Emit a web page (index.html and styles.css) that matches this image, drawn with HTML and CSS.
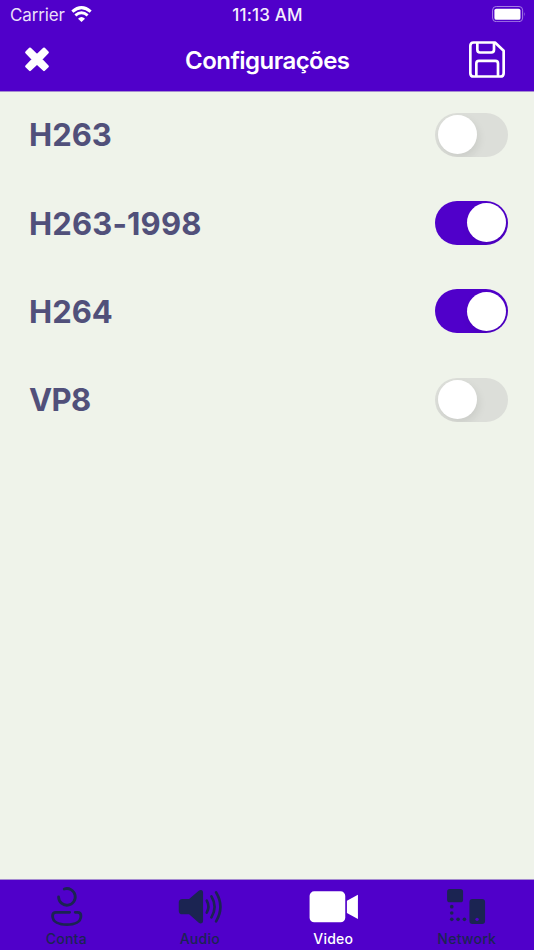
FILE: index.html
```html
<!DOCTYPE html>
<html lang="pt">
<head>
<meta charset="utf-8">
<title>Configurações</title>
<link rel="stylesheet" href="styles.css">
</head>
<body>
<div class="app">
  <header class="header">
    <div class="status">
      <div class="carrier"><span class="carrier-name">Carrier</span>
        <svg class="wifi" viewBox="0 0 63 48"><path d="M4 17Q31.500-7 59 17" fill="none" stroke="#fff" stroke-width="9"/><path d="M13 28Q31.500 12 50 28" fill="none" stroke="#fff" stroke-width="8.500"/><path d="M21 38Q31.500 28 42 38L31.500 48Z" fill="#fff"/></svg>
      </div>
      <span class="time">11:13 AM</span>
      <svg class="battery" viewBox="0 0 104 50"><rect x="1.500" y="1.500" width="91" height="46" rx="11" fill="none" stroke="#a780e5" stroke-width="3"/><rect x="7" y="8" width="79" height="34" rx="6" fill="#fff"/><path d="M97 18q5 7 0 14z" fill="#a780e5"/></svg>
    </div>
    <div class="navbar">
      <svg class="close" viewBox="0 0 72 74"><path d="M15 5L36 25L57 5L68 16L48 37L68 58L57 69L36 49L15 69L4 58L24 37L4 16Z" fill="#fff" stroke="#fff" stroke-width="7" stroke-linejoin="round"/></svg>
      <h1 class="title">Configurações</h1>
      <svg class="save" viewBox="0 0 108 110"><g fill="none" stroke="#fff" stroke-width="8" stroke-linejoin="round"><path d="M14 4H78L104 29V96Q104 106 94 106H14Q4 106 4 96V14Q4 4 14 4Z"/><path d="M25 5V26Q25 34 33 34H67Q75 34 75 26V5"/><path d="M22 105V67Q22 59 30 59H79Q87 59 87 67V105"/></g></svg>
    </div>
  </header>
  <main class="list">
    <div class="row"><span class="label">H263</span><span class="switch"></span></div>
    <div class="row"><span class="label wide">H263-1998</span><span class="switch on"></span></div>
    <div class="row"><span class="label">H264</span><span class="switch on"></span></div>
    <div class="row"><span class="label tight">VP8</span><span class="switch"></span></div>
  </main>
  <nav class="tabs">
    <div class="tab"><svg class="icon" viewBox="-9.750 33 240 144"><g fill="none" stroke="currentColor" stroke-width="8.500" stroke-linecap="round"><path d="M102 57A25 25 0 1 1 85 81"/><path d="M118 127H77Q67 127 67 138C67 156 87 164 110 164S152 156 152 138Q152 127 142 127H135"/></g></svg><span>Conta</span></div>
    <div class="tab"><svg class="icon" viewBox=".750 33 240 144"><path d="M68 87H88L117 62Q122 58 127 61Q130 63 130 68V152Q130 157 127 159Q122 162 117 158L88 133H68Q57 133 57 122V98Q57 87 68 87Z" fill="currentColor"/><g fill="none" stroke="currentColor" stroke-width="8" stroke-linecap="round"><path d="M141 92Q151 110 141 128M155 79Q174 110 155 142M169 67Q195 110 169 154"/></g></svg><span>Audio</span></div>
    <div class="tab active"><svg class="icon" viewBox="11.250 33 240 144"><rect x="58" y="64" width="107" height="93" rx="14" fill="currentColor"/><path d="M170 92L203 74V147L170 129Z" fill="currentColor"/></svg><span>Video</span></div>
    <div class="tab"><svg class="icon" viewBox="6.750 33 240 144"><g fill="currentColor"><rect x="67" y="57" width="48" height="40" rx="8"/><rect x="134" y="87" width="47" height="75" rx="9"/><circle cx="81" cy="110" r="5.500"/><circle cx="81" cy="129" r="5.500"/><circle cx="81" cy="148" r="5.500"/><circle cx="100" cy="148" r="5.500"/><circle cx="119" cy="148" r="5.500"/></g><circle cx="157" cy="148" r="5" fill="#5000ca"/></svg><span>Network</span></div>
  </nav>
</div>
</body>
</html>
```
FILE: styles.css
```css
* { box-sizing: border-box; }
body { margin: 0; font-family: Inter, "Liberation Sans", sans-serif; }
svg { display: block; flex: none; }
.app { width: 534px; height: 950px; display: flex; flex-direction: column; background: #eff3ea; }
.header { height: 92px; flex: none; background: #5000ca; border-bottom: 1px solid #a58bd0; color: #fff; }
.status { height: 30px; padding: 0 8px 0 10px; display: grid; grid-template-columns: 1fr auto 1fr; align-items: center; }
.carrier { display: flex; align-items: center; gap: 7px; font-size: 17px; color: #e9dff8; }
.carrier-name { width: 54px; letter-spacing: -.15px; white-space: nowrap; }
.wifi { width: 21px; height: 16px; margin-top: -2px; }
.time { font-size: 17px; font-weight: 500; letter-spacing: .15px; margin-left: -1px; color: #f4effc; }
.battery { width: 34.500px; height: 16.500px; justify-self: end; margin-top: -2px; }
.navbar { height: 60px; padding: 0 28.500px 0 25px; display: grid; grid-template-columns: 1fr auto 1fr; align-items: center; }
.close { width: 24px; height: 24.700px; margin-top: -1px; }
.title { margin: 1px -2px 0 2px; font-size: 24px; line-height: 32px; font-weight: 600; letter-spacing: -.55px; }
.save { width: 36px; height: 37px; justify-self: end; margin: -2px 1px 0 0; }
.list { flex: 1; margin-top: -2px; }
.row { height: 88.300px; padding: 0 26px 0 29px; display: flex; align-items: center; justify-content: space-between; }
.label { font-size: 31px; line-height: 40px; font-weight: 700; color: #51507a; margin-top: 2.500px; }
.wide { letter-spacing: .15px; }
.tight { letter-spacing: -.6px; }
.switch { width: 73px; height: 44px; margin-top: 1px; padding: 2.500px; border-radius: 22px; display: flex; background: #dcded9; overflow: hidden; }
.switch::before { content: ""; width: 39px; height: 39px; border-radius: 50%; background: #fff; box-shadow: 2px 4px 8px rgba(0, 0, 0, .08); }
.switch.on { justify-content: flex-end; background: #5000ca; }
.tabs { height: 71px; flex: none; padding-top: 1px; display: grid; grid-template-columns: repeat(4, 1fr); background: #5000ca; border-top: 1px solid #a58bd0; color: #1b2452; }
.tab { display: flex; flex-direction: column; align-items: center; font-size: 14px; line-height: 20px; font-weight: 500; letter-spacing: .25px; }
.tab span { margin-left: -1px; }
.active { color: #fff; }
.icon { width: 80px; height: 48px; }
```
